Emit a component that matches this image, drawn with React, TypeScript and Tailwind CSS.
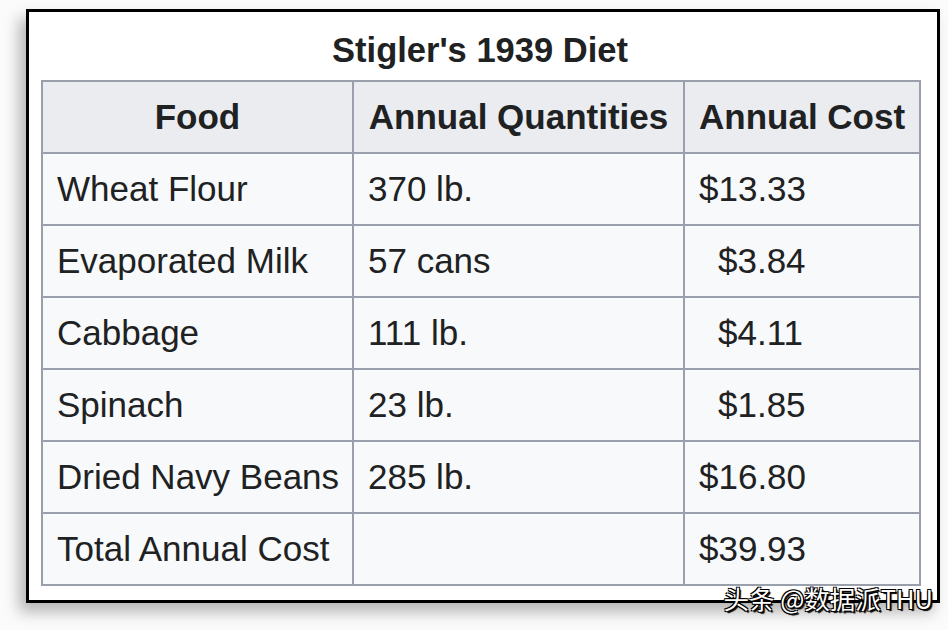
import { type FC } from 'react'

// 表格数据
interface DietRow {
  food: string
  quantity: string
  cost: string
  indent?: boolean
}

const rows: DietRow[] = [
  { food: 'Wheat Flour', quantity: '370 lb.', cost: '$13.33' },
  { food: 'Evaporated Milk', quantity: '57 cans', cost: '$3.84', indent: true },
  { food: 'Cabbage', quantity: '111 lb.', cost: '$4.11', indent: true },
  { food: 'Spinach', quantity: '23 lb.', cost: '$1.85', indent: true },
  { food: 'Dried Navy Beans', quantity: '285 lb.', cost: '$16.80' },
  { food: 'Total Annual Cost', quantity: '', cost: '$39.93' }
]

const cellBase = 'border-2 border-[#9aa0ab] px-[14px] align-middle'

const App: FC = () => {
  return (
    <div className="min-h-[630px] w-[948px] bg-[#fbfbfb] pt-[9px] pl-[26px] font-['Liberation_Sans',Arial,sans-serif] text-[#202122]">
      <div className="relative w-[914px] h-[594px] border-[3px] border-black bg-white shadow-[-7px_9px_14px_rgba(0,0,0,0.28)]">
        {/* 标题 */}
        <div className="h-[68px] w-[902px] pl-[12px] flex items-end">
          <div className="w-[878px] text-center text-[34.5px] font-bold leading-[39px] pb-[10px]">
            Stigler's 1939 Diet
          </div>
        </div>

        {/* 表格 */}
        <table className="ml-[12px] w-[878px] border-collapse table-fixed text-[35px] leading-[40px]">
          <colgroup>
            <col className="w-[311px]" />
            <col className="w-[331px]" />
            <col className="w-[236px]" />
          </colgroup>
          <thead>
            <tr className="h-[72px] bg-[#eaecf0]">
              <th className={`${cellBase} text-center font-bold`}>Food</th>
              <th className={`${cellBase} text-center font-bold whitespace-nowrap`}>Annual Quantities</th>
              <th className={`${cellBase} text-center font-bold whitespace-nowrap`}>Annual Cost</th>
            </tr>
          </thead>
          <tbody>
            {rows.map(row => (
              <tr key={row.food} className="h-[72px] bg-[#f8f9fa]">
                <td className={`${cellBase} whitespace-nowrap`}>{row.food}</td>
                <td className={`${cellBase} whitespace-nowrap`}>{row.quantity}</td>
                <td className={`${cellBase} whitespace-nowrap`}>
                  <span className={row.indent ? 'pl-[19px]' : ''}>{row.cost}</span>
                </td>
              </tr>
            ))}
          </tbody>
        </table>

        {/* 水印 */}
        <div className="absolute right-[4px] bottom-[-13px] text-[25.5px] leading-[30px] text-white font-['Noto_Sans_CJK_SC',sans-serif] [text-shadow:1px_1px_0_#000,-1px_-1px_0_#000,1px_-1px_0_#000,-1px_1px_0_#000,2px_2px_1px_#000]">
          头条 @数据派THU
        </div>
      </div>
    </div>
  )
}

export default App
